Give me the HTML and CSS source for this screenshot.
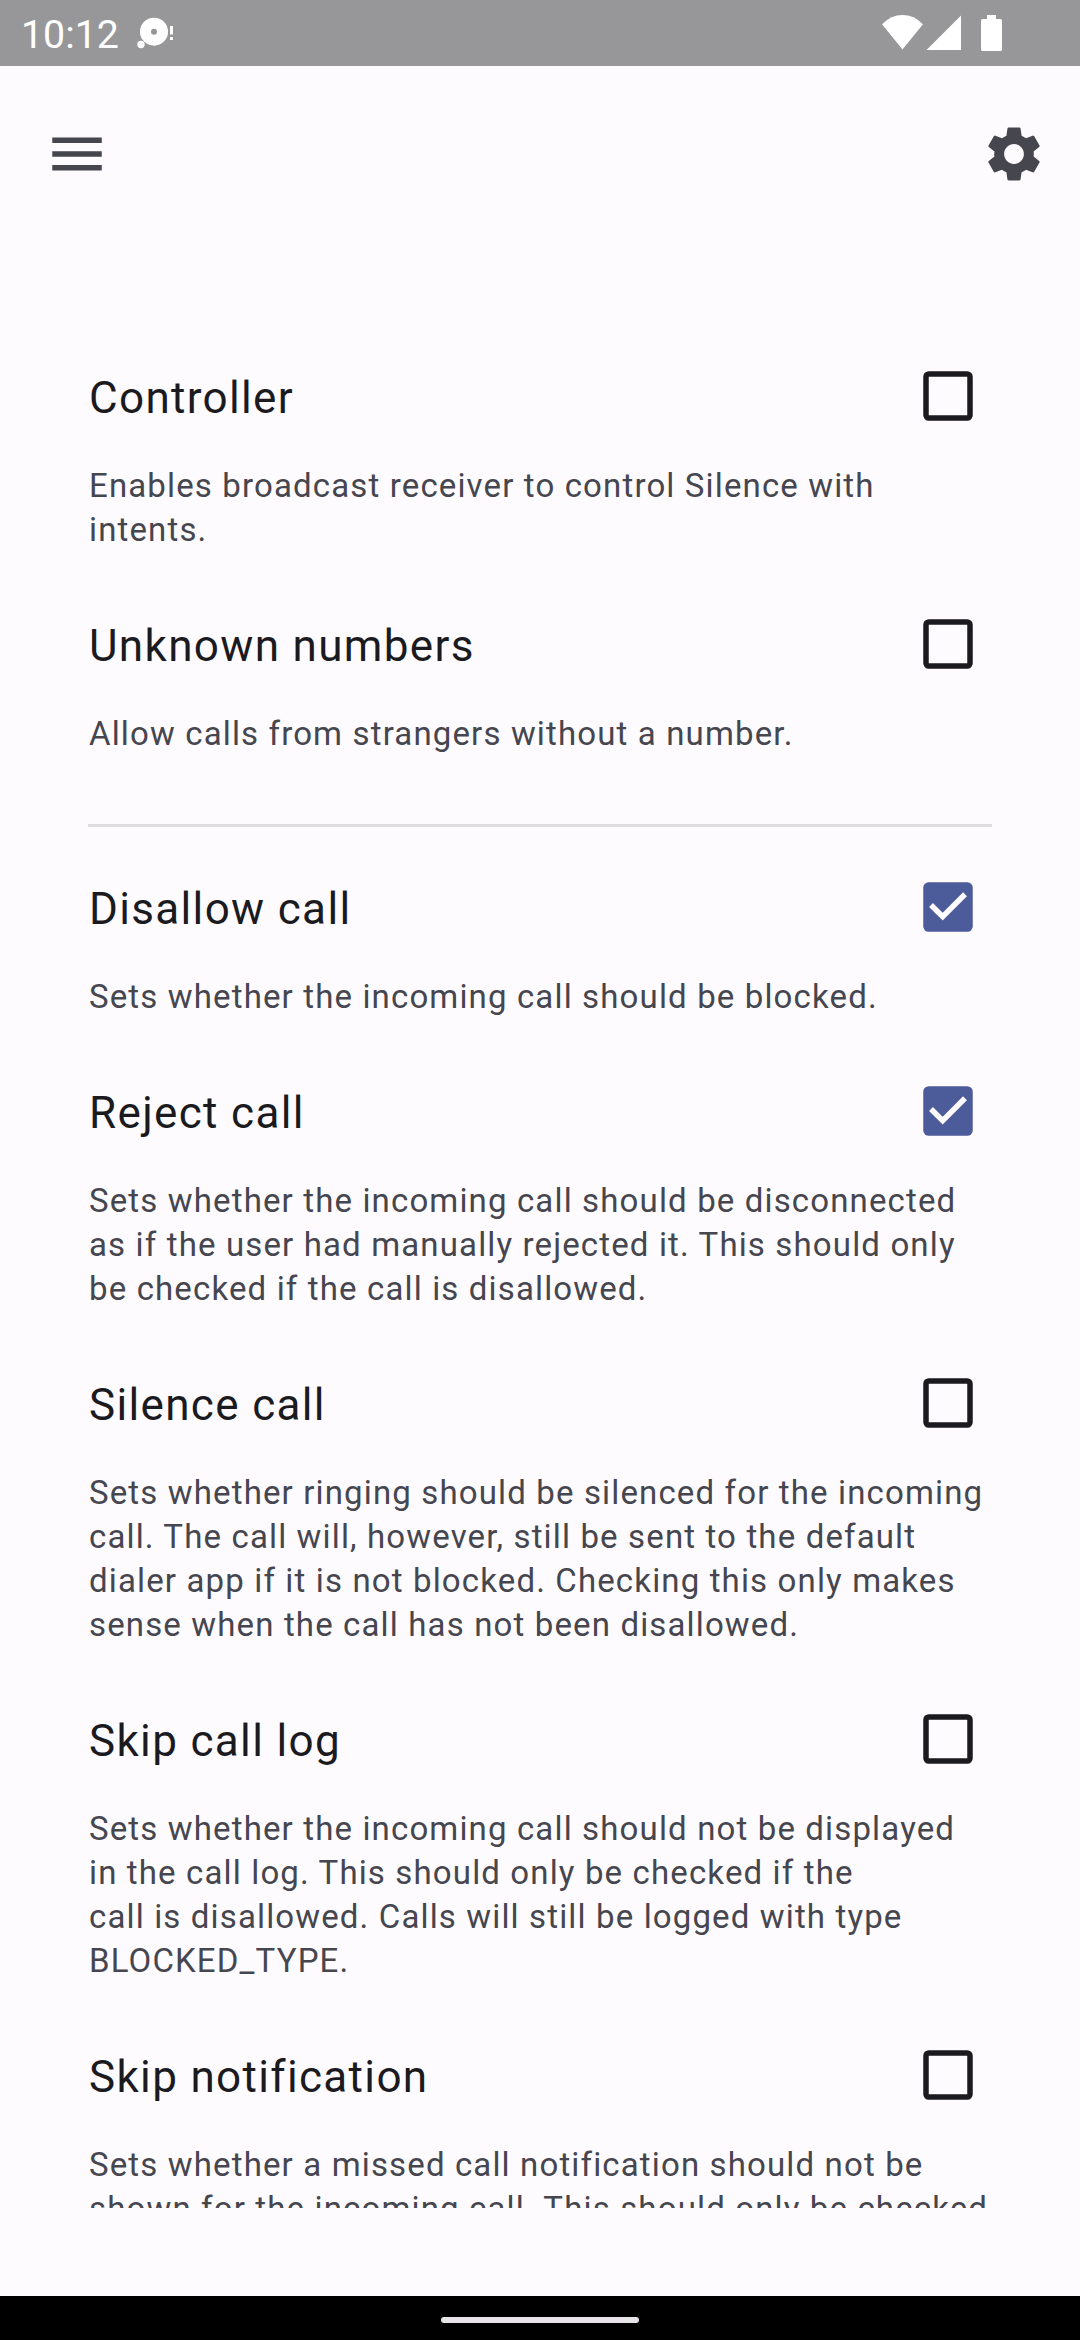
FILE: index.html
```html
<!DOCTYPE html>
<html lang="en">
<head>
<meta charset="utf-8">
<title>Silence</title>
<link rel="stylesheet" href="styles.css">
</head>
<body>
<header class="status">
  <span class="clock">10:12</span>
  <svg class="notif" width="40" height="66" viewBox="0 0 40 66" fill="#fff"><circle cx="18" cy="31.7" r="14"/><circle cx="18" cy="31.7" r="3" fill="#979799"/><circle cx="5" cy="44.5" r="3.7"/><path d="M34 26h3v8.5h-3zM34 37h3v3h-3z"/></svg>
  <svg class="signals" width="121" height="66" viewBox="0 0 121 66" fill="#fff"><path d="M0 24.3Q9 15 20.5 15T41 24.3L20.5 49.5Z"/><path d="M44.5 50L79 15.5V50Z"/><path d="M105 15h9v4h4.500q1.500 0 1.500 1.500v29q0 1.500-1.500 1.500h-18q-1.500 0-1.500-1.500v-29q0-1.500 1.500-1.500h4.500z"/></svg>
</header>
<nav class="bar">
  <svg width="66" height="66" viewBox="0 0 24 24"><path fill="#46464f" d="M3 18h18v-2H3v2zm0-5h18v-2H3v2zm0-7v2h18V6H3z"/></svg>
  <svg width="66" height="66" viewBox="0 0 24 24"><path fill="#46464f" d="M19.14 12.94c.04-.3.06-.61.06-.94 0-.32-.02-.64-.07-.94l2.03-1.58c.18-.14.23-.41.12-.61l-1.92-3.32c-.12-.22-.37-.29-.59-.22l-2.39.96c-.5-.38-1.03-.7-1.62-.94L14.4 2.81c-.04-.24-.24-.41-.48-.41h-3.84c-.24 0-.43.17-.47.41L9.25 5.35C8.66 5.59 8.12 5.92 7.63 6.29L5.24 5.33c-.22-.08-.47 0-.59.22L2.74 8.87c-.12.21-.08.47.12.61l2.03 1.58c-.05.3-.09.63-.09.94s.02.64.07.94l-2.03 1.58c-.18.14-.23.41-.12.61l1.92 3.32c.12.22.37.29.59.22l2.39-.96c.5.38 1.03.7 1.62.94l.36 2.54c.05.24.24.41.48.41h3.84c.24 0 .44-.17.47-.41l.36-2.54c.59-.24 1.13-.56 1.62-.94l2.39.96c.22.08.47 0 .59-.22l1.92-3.32c.12-.22.07-.47-.12-.61zM12 15.6c-1.98 0-3.6-1.62-3.6-3.6s1.62-3.6 3.6-3.6 3.6 1.62 3.6 3.6-1.62 3.6-3.6 3.6z"/></svg>
</nav>
<svg width="0" height="0" class="defs">
  <symbol id="off" viewBox="0 0 50 50"><rect x="3" y="3" width="44" height="44" rx="2.75" fill="none" stroke="#1b1b1f" stroke-width="5.500"/></symbol>
  <symbol id="on" viewBox="0 0 50 50"><rect x=".25" y=".25" width="49.500" height="49.500" rx="5.500" fill="#4c5b99"/><path d="M8 23L19.700 34.700L42 12.300" fill="none" stroke="#fefbff" stroke-width="5.500"/></symbol>
</svg>
<main class="list">
  <section class="item">
    <div class="head"><h2>Controller</h2><svg class="check"><use href="#off"/></svg></div>
    <p>Enables broadcast receiver to control Silence with<br>intents.</p>
  </section>
  <section class="item">
    <div class="head"><h2>Unknown numbers</h2><svg class="check"><use href="#off"/></svg></div>
    <p>Allow calls from strangers without a number.</p>
  </section>
  <hr>
  <section class="item">
    <div class="head"><h2>Disallow call</h2><svg class="check"><use href="#on"/></svg></div>
    <p>Sets whether the incoming call should be blocked.</p>
  </section>
  <section class="item">
    <div class="head"><h2>Reject call</h2><svg class="check"><use href="#on"/></svg></div>
    <p>Sets whether the incoming call should be disconnected<br>as if the user had manually rejected it. This should only<br>be checked if the call is disallowed.</p>
  </section>
  <section class="item">
    <div class="head"><h2>Silence call</h2><svg class="check"><use href="#off"/></svg></div>
    <p>Sets whether ringing should be silenced for the incoming<br>call. The call will, however, still be sent to the default<br>dialer app if it is not blocked. Checking this only makes<br>sense when the call has not been disallowed.</p>
  </section>
  <section class="item">
    <div class="head"><h2>Skip call log</h2><svg class="check"><use href="#off"/></svg></div>
    <p>Sets whether the incoming call should not be displayed<br>in the call log. This should only be checked if the<br>call is disallowed. Calls will still be logged with type<br>BLOCKED_TYPE.</p>
  </section>
  <section class="item">
    <div class="head"><h2>Skip notification</h2><svg class="check"><use href="#off"/></svg></div>
    <p>Sets whether a missed call notification should not be<br>shown for the incoming call. This should only be checked</p>
  </section>
</main>
<footer class="navbar"><span class="pill"></span></footer>
</body>
</html>
```
FILE: styles.css
```css
* { box-sizing: border-box; }
body {
  margin: 0;
  width: 1080px;
  height: 2340px;
  overflow: hidden;
  display: flex;
  flex-direction: column;
  background: #fefbff;
  font-family: Roboto, sans-serif;
}
svg { display: block; flex: none; }
.defs { height: 0; }
.status {
  height: 66px;
  flex: none;
  background: #979799;
  display: flex;
  padding: 0 77px 0 21px;
}
.clock {
  width: 115px;
  padding-top: 2px;
  font-size: 39.3px;
  line-height: 66px;
  color: #fff;
}
.signals { margin-left: auto; }
.bar {
  height: 264px;
  flex: none;
  display: flex;
  justify-content: space-between;
  padding: 55px 33px 0 44px;
}
.list {
  height: 1878px;
  flex: none;
  overflow: hidden;
  padding: 0 88px;
}
.item { padding: 0 0 26px 1px; }
.head {
  height: 132px;
  display: flex;
  align-items: center;
  justify-content: space-between;
  padding-right: 19px;
}
h2 {
  margin: 0;
  padding-top: 3px;
  font-size: 44px;
  font-weight: 400;
  line-height: 66px;
  letter-spacing: 1.34px;
  color: #1b1b1f;
}
.check { width: 50px; height: 50px; }
p {
  margin: 0;
  padding-top: 2px;
  font-size: 33px;
  line-height: 44px;
  letter-spacing: 1.14px;
  white-space: nowrap;
  color: #46464f;
}
hr {
  height: 3px;
  margin: 42px 0 14px;
  border: 0;
  background: #dfdde0;
}
.navbar {
  height: 44px;
  margin-top: auto;
  background: #000;
  display: flex;
  align-items: center;
  justify-content: center;
  padding-top: 4px;
}
.pill { width: 198px; height: 6px; border-radius: 3px; background: #e8e5e9; }
```
